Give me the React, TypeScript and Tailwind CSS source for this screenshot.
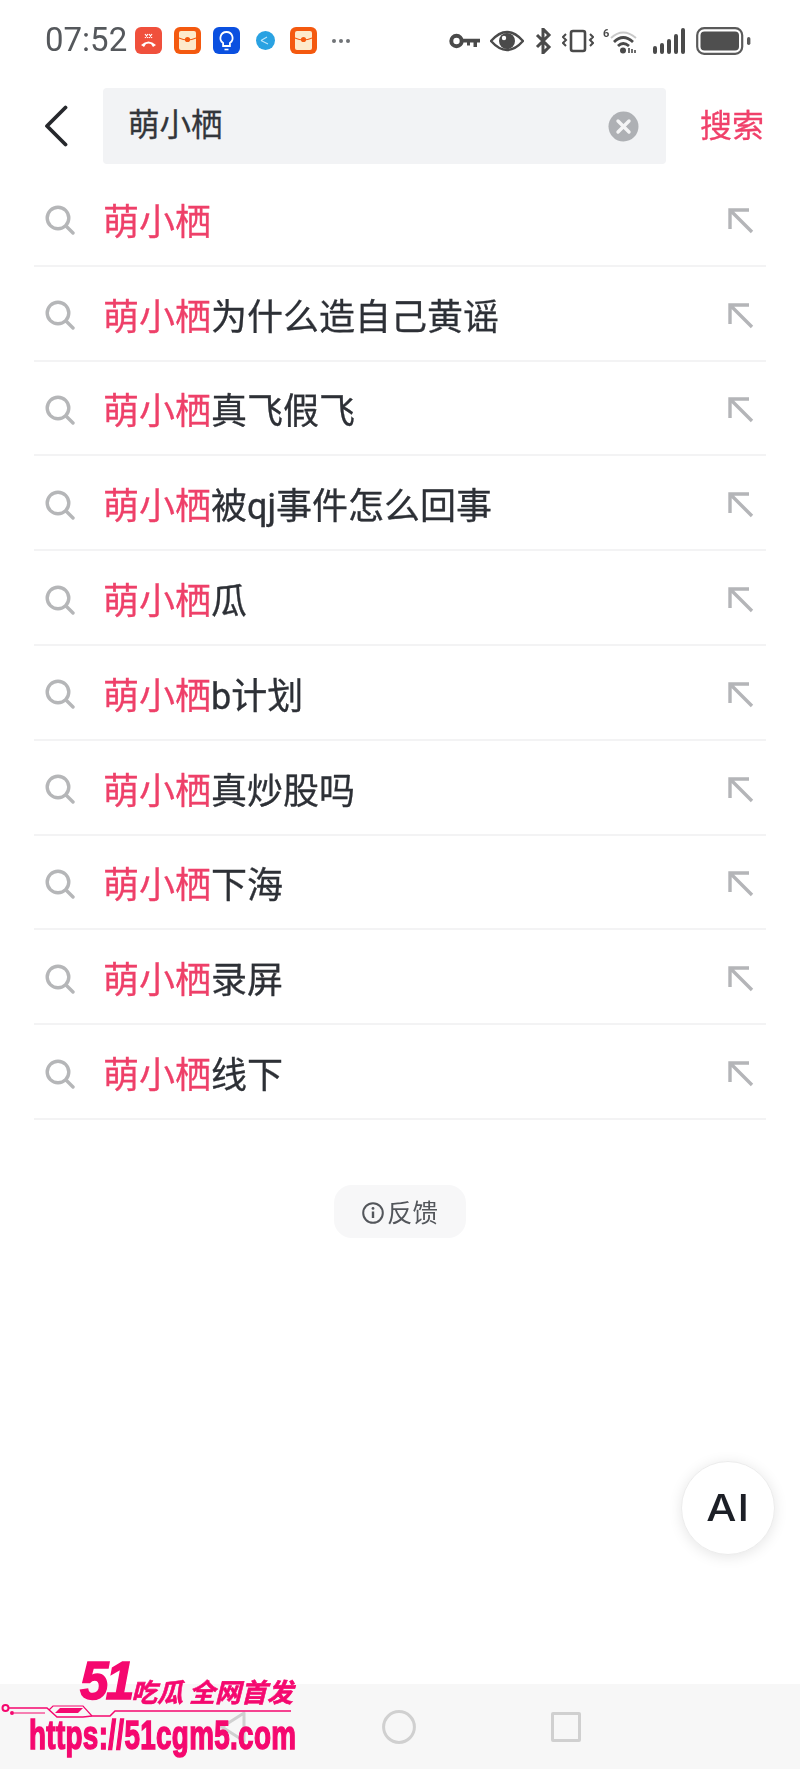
const suggestions = [
  '',
  '为什么造自己黄谣',
  '真飞假飞',
  '被qj事件怎么回事',
  '瓜',
  'b计划',
  '真炒股吗',
  '下海',
  '录屏',
  '线下',
];

const sans = 'font-["Roboto","Noto_Sans_CJK_SC",sans-serif]';

function AppBadge({ bg, children }: { bg: string; children: React.ReactNode }) {
  return (
    <svg width="27" height="27" viewBox="0 0 27 27" className="shrink-0">
      <rect width="27" height="27" rx="6" fill={bg} />
      {children}
    </svg>
  );
}

function RedPacket() {
  return (
    <AppBadge bg="#f4590f">
      <rect x="5" y="4" width="17" height="19" rx="2" fill="#fdeacb" />
      <path d="M5 11 Q13.5 15 22 11" stroke="#f4590f" strokeWidth="1.2" fill="none" />
      <circle cx="13.5" cy="12.5" r="2.6" fill="#f4590f" />
    </AppBadge>
  );
}

function StatusBar() {
  return (
    <div className="h-[88px] flex items-start pt-[27px] pl-[45px] pr-[48px] text-[#55585c]">
      <span className="w-[90px] text-[33px] leading-[26px] font-['Roboto',sans-serif]">07:52</span>
      <div className="flex items-center gap-[12px] h-[27px]">
        <AppBadge bg="#f0503c">
          <path d="M6 18 Q13.5 11 21 18 L18 20 L16 17 Q13.5 16 11 17 L9 20 Z" fill="#fff" />
          <path d="M10 7 L13 11 M17 7 L14 11 M10 11 L13 7 M17 11 L14 7" stroke="#fff" strokeWidth="1.2" />
        </AppBadge>
        <RedPacket />
        <AppBadge bg="#0b50e0">
          <path d="M13.5 5 a6 6 0 0 1 3.4 11 v3 h-6.8 v-3 a6 6 0 0 1 3.4 -11 Z" fill="none" stroke="#fff" strokeWidth="1.8" />
          <path d="M11.5 22.5 h4" stroke="#fff" strokeWidth="1.6" />
        </AppBadge>
        <svg width="19" height="19" viewBox="0 0 19 19" className="shrink-0 ml-[4px] mr-[3px]">
          <circle cx="9.5" cy="9.5" r="9.5" fill="#2aa2e2" />
          <path d="M5 9.5 L11 6 M5 9.5 L12 13" stroke="#bfe6fa" strokeWidth="1.1" />
        </svg>
        <RedPacket />
        <svg width="20" height="6" viewBox="0 0 20 6" className="shrink-0 ml-[2px]">
          <circle cx="3" cy="3" r="2" fill="#707377" />
          <circle cx="10" cy="3" r="2" fill="#707377" />
          <circle cx="17" cy="3" r="2" fill="#707377" />
        </svg>
      </div>
      <div className="ml-auto flex items-center h-[27px]">
        <svg width="31" height="16" viewBox="0 0 31 16" className="shrink-0">
          <circle cx="7.5" cy="8" r="5.2" fill="none" stroke="#4a4a4a" strokeWidth="4" />
          <path d="M13 5.8 H31 V9.4 H28 V14 H24.5 V9.4 H21 V12.5 H18 V9.4 H13 Z" fill="#4a4a4a" />
        </svg>
        <svg width="34" height="24" viewBox="0 0 34 24" className="ml-[10px] shrink-0">
          <path d="M1 12 Q17 -6 33 12 Q17 30 1 12 Z" fill="none" stroke="#4a4a4a" strokeWidth="2.4" />
          <circle cx="17" cy="12" r="8" fill="#4a4a4a" />
          <circle cx="14" cy="9" r="2.2" fill="#fff" />
        </svg>
        <svg width="18" height="26" viewBox="0 0 18 26" className="ml-[11px] shrink-0">
          <path d="M2 7 L14 19 L8 25 V1 L14 7 L2 19" fill="none" stroke="#4a4a4a" strokeWidth="3" />
        </svg>
        <svg width="32" height="24" viewBox="0 0 32 24" className="ml-[9px] shrink-0">
          <rect x="9" y="2" width="14" height="20" rx="2" fill="none" stroke="#4a4a4a" strokeWidth="2.6" />
          <path d="M4 5 L1 8 L4 11 L1 14 L4 17 M28 5 L31 8 L28 11 L31 14 L28 17" fill="none" stroke="#4a4a4a" strokeWidth="2" />
        </svg>
        <svg width="36" height="27" viewBox="0 0 36 27" className="ml-[9px] shrink-0">
          <text x="0" y="10" fontSize="11" fontWeight="700" fill="#4a4a4a" fontFamily="Roboto, sans-serif">6</text>
          <path d="M8 11 Q20 0 33 11" fill="none" stroke="#c9c9c9" strokeWidth="2" />
          <path d="M11 15 Q20 6 30 15" fill="none" stroke="#4a4a4a" strokeWidth="2.8" />
          <path d="M15 19 Q20 14 26 19" fill="none" stroke="#4a4a4a" strokeWidth="2.8" />
          <circle cx="20" cy="23.5" r="3" fill="#4a4a4a" />
          <path d="M26 21 v5 M29 22 v4 M32 23 v3" stroke="#4a4a4a" strokeWidth="1.6" />
        </svg>
        <svg width="32" height="26" viewBox="0 0 32 26" className="ml-[14px] shrink-0">
          <path d="M2 20 V24 M9 17 V24 M16 13 V24 M23 8 V24 M30 2 V24" stroke="#4a4a4a" strokeWidth="4" strokeLinecap="round" />
        </svg>
        <svg width="56" height="28" viewBox="0 0 56 28" className="ml-[11px] shrink-0">
          <rect x="1.2" y="1.2" width="45" height="25.6" rx="7" fill="none" stroke="#5a5a5a" strokeWidth="2.2" />
          <rect x="4.5" y="4.5" width="38.5" height="19" rx="4" fill="#4f4f4f" />
          <rect x="51" y="10" width="3.4" height="8" rx="1.7" fill="#5a5a5a" />
        </svg>
      </div>
    </div>
  );
}

function SearchHeader() {
  return (
    <div className="h-[76px] flex items-center">
      <div className="w-[103px] pl-[44px] shrink-0">
        <svg width="24" height="42" viewBox="0 0 24 42" className="block">
          <path d="M21.5 2.5 L3 21 L21.5 39.5" fill="none" stroke="#26282c" strokeWidth="3.8" strokeLinecap="round" strokeLinejoin="round" />
        </svg>
      </div>
      <div className="w-[563px] h-full bg-[#f2f3f5] rounded-[4px] flex items-center pl-[25px] pr-[27px]">
        <span className="text-[31.5px] text-[#33363b] [-webkit-text-stroke:0.3px_#33363b]">萌小栖</span>
        <svg width="31" height="31" viewBox="0 0 31 31" className="ml-auto">
          <circle cx="15.5" cy="15.5" r="15" fill="#aeb0b4" />
          <path d="M10 10 L21 21 M21 10 L10 21" stroke="#f4f4f5" strokeWidth="3.4" strokeLinecap="round" />
        </svg>
      </div>
      <span className="ml-[34px] text-[32px] text-[#f0406a] [-webkit-text-stroke:0.3px_#f0406a]">搜索</span>
    </div>
  );
}

export default function App() {
  return (
    <div className={`relative w-[800px] h-[1769px] overflow-hidden bg-white ${sans}`}>
      <div className="flex flex-col h-full blur-[0.7px]">
        <StatusBar />
        <SearchHeader />

        <div className="mt-[8px] mx-[34px] w-[732px]">
          {suggestions.map((s) => (
            <div key={s} className="h-[94.8px] pt-[4px] flex items-center border-b-2 border-[#f3f3f4]">
              <svg width="30" height="30" viewBox="0 0 30 30" className="ml-[11px] shrink-0">
                <circle cx="13" cy="13" r="10.8" fill="none" stroke="#b5b6b8" strokeWidth="3.4" />
                <path d="M21 21 L28 28" stroke="#b5b6b8" strokeWidth="3.4" strokeLinecap="round" />
              </svg>
              <div className="ml-[28px] text-[36px] leading-none whitespace-nowrap pt-[5px]">
                <span className="text-[#ee4069] [-webkit-text-stroke:0.3px_#ee4069]">萌小栖</span>
                <span className="text-[#2d3036] [-webkit-text-stroke:0.3px_#2d3036]">{s}</span>
              </div>
              <svg width="27" height="27" viewBox="0 0 27 27" className="ml-auto mr-[12px] shrink-0">
                <path d="M3 22 V3 H22 M3 3 L25 25" fill="none" stroke="#b4b5b8" strokeWidth="3.4" />
              </svg>
            </div>
          ))}
        </div>

        <div className="mt-[65px] pt-[3px] self-center w-[132px] h-[53px] rounded-[18px] bg-[#f7f7f8] flex items-center justify-center gap-[3px] text-[25.5px] text-[#53565b]">
          <svg width="22" height="22" viewBox="0 0 22 22">
            <circle cx="11" cy="11" r="9.8" fill="none" stroke="#53565b" strokeWidth="2" />
            <path d="M11 9.5 V16" stroke="#53565b" strokeWidth="2.4" />
            <circle cx="11" cy="6.4" r="1.4" fill="#53565b" />
          </svg>
          <span>反馈</span>
        </div>

        <div className="mt-auto h-[85px] bg-[#f7f7f7] flex items-center justify-center">
          <svg width="26" height="32" viewBox="0 0 26 32" className="mr-[136px]">
            <path d="M24 2 V30 L2 16 Z" fill="none" stroke="#d0d0d0" strokeWidth="3" strokeLinejoin="round" />
          </svg>
          <svg width="34" height="34" viewBox="0 0 34 34">
            <circle cx="17" cy="17" r="15.4" fill="none" stroke="#d0d0d0" strokeWidth="3" />
          </svg>
          <div className="ml-[135px] w-[30px] h-[30px] rounded-[2px] border-[3px] border-[#d0d0d0]" />
        </div>
      </div>

      {/* AI button */}
      <div className="absolute left-[681px] top-[1461px] w-[94px] h-[94px] rounded-full bg-white border border-[#ececec] shadow-[0_2px_14px_rgba(0,0,0,0.1)] flex items-center justify-center blur-[0.4px]">
        <span className="scale-x-[1.15] text-[37px] font-medium text-[#1c1f26] font-['Inter',sans-serif] tracking-[1px]">AI</span>
      </div>

      {/* watermark */}
      <div className="absolute left-0 top-[1655px] w-[300px] h-[114px] text-[#f5086f]">
        <div className="absolute left-[80px] top-[-5px] origin-left scale-x-[0.95] text-[54px] leading-[60px] font-black italic font-['Liberation_Sans',sans-serif] tracking-[-3px] [-webkit-text-stroke:1.5px_#f5086f]">51</div>
        <div className="absolute left-[131px] top-[21px] text-[26px] leading-[30px] font-bold italic whitespace-nowrap font-['Noto_Sans_CJK_SC',sans-serif] [-webkit-text-stroke:0.6px_#f5086f]">吃瓜 全网首发</div>
        <svg width="300" height="30" viewBox="0 0 300 30" className="absolute left-0 top-[42px]">
          <circle cx="5.5" cy="11" r="3" fill="none" stroke="#f5086f" strokeWidth="2" />
          <circle cx="12" cy="16" r="2" fill="#f5086f" />
          <path d="M9 11 H47 L57 20 H83 L92 19 H110 L115 14 H291" fill="none" stroke="#f5086f" strokeWidth="1.5" />
          <path d="M14 16 H45 M49 13 L53 9 H83 L92 19" fill="none" stroke="#f5086f" strokeWidth="1.2" />
          <path d="M55 16 L60 11 H83 L78 16 Z" fill="#f5086f" />
        </svg>
        <div className="absolute left-[29px] top-[57px] origin-left scale-x-[0.695] text-[40px] leading-[46px] font-bold whitespace-nowrap font-['Liberation_Sans',sans-serif] tracking-[0.5px] [-webkit-text-stroke:1.5px_#f5086f]">https://51cgm5.com</div>
      </div>
    </div>
  );
}
